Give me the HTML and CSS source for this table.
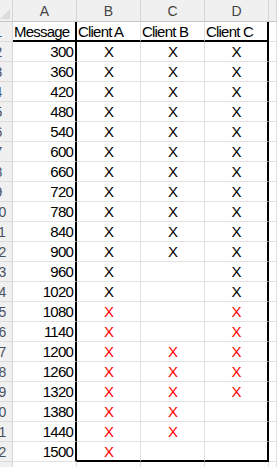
FILE: index.html
```html
<!DOCTYPE html>
<html>
<head>
<meta charset="utf-8">
<link rel="stylesheet" href="styles.css">
</head>
<body>
<div class="sheet">
  <div class="c hd corner"></div>
  <div class="c hd">A</div>
  <div class="c hd">B</div>
  <div class="c hd">C</div>
  <div class="c hd">D</div>
  <div class="c hd"></div>

  <div class="c rh sel"><span>1</span></div>
  <div class="c t br bb">Message</div>
  <div class="c t bb">Client A</div>
  <div class="c t bb">Client B</div>
  <div class="c t br bb">Client C</div>
  <div class="c"></div>

  <div class="c rh"><span>2</span></div><div class="c n br">300</div><div class="c x">X</div><div class="c x">X</div><div class="c x br">X</div><div class="c"></div>
  <div class="c rh"><span>3</span></div><div class="c n br">360</div><div class="c x">X</div><div class="c x">X</div><div class="c x br">X</div><div class="c"></div>
  <div class="c rh"><span>4</span></div><div class="c n br">420</div><div class="c x">X</div><div class="c x">X</div><div class="c x br">X</div><div class="c"></div>
  <div class="c rh"><span>5</span></div><div class="c n br">480</div><div class="c x">X</div><div class="c x">X</div><div class="c x br">X</div><div class="c"></div>
  <div class="c rh"><span>6</span></div><div class="c n br">540</div><div class="c x">X</div><div class="c x">X</div><div class="c x br">X</div><div class="c"></div>
  <div class="c rh"><span>7</span></div><div class="c n br">600</div><div class="c x">X</div><div class="c x">X</div><div class="c x br">X</div><div class="c"></div>
  <div class="c rh"><span>8</span></div><div class="c n br">660</div><div class="c x">X</div><div class="c x">X</div><div class="c x br">X</div><div class="c"></div>
  <div class="c rh"><span>9</span></div><div class="c n br">720</div><div class="c x">X</div><div class="c x">X</div><div class="c x br">X</div><div class="c"></div>
  <div class="c rh"><span>10</span></div><div class="c n br">780</div><div class="c x">X</div><div class="c x">X</div><div class="c x br">X</div><div class="c"></div>
  <div class="c rh"><span>11</span></div><div class="c n br">840</div><div class="c x">X</div><div class="c x">X</div><div class="c x br">X</div><div class="c"></div>
  <div class="c rh"><span>12</span></div><div class="c n br">900</div><div class="c x">X</div><div class="c x">X</div><div class="c x br">X</div><div class="c"></div>
  <div class="c rh"><span>13</span></div><div class="c n br">960</div><div class="c x">X</div><div class="c x"></div><div class="c x br">X</div><div class="c"></div>
  <div class="c rh"><span>14</span></div><div class="c n br">1020</div><div class="c x">X</div><div class="c x"></div><div class="c x br">X</div><div class="c"></div>
  <div class="c rh"><span>15</span></div><div class="c n br">1080</div><div class="c x red">X</div><div class="c x"></div><div class="c x br red">X</div><div class="c"></div>
  <div class="c rh"><span>16</span></div><div class="c n br">1140</div><div class="c x red">X</div><div class="c x"></div><div class="c x br red">X</div><div class="c"></div>
  <div class="c rh"><span>17</span></div><div class="c n br">1200</div><div class="c x red">X</div><div class="c x red">X</div><div class="c x br red">X</div><div class="c"></div>
  <div class="c rh"><span>18</span></div><div class="c n br">1260</div><div class="c x red">X</div><div class="c x red">X</div><div class="c x br red">X</div><div class="c"></div>
  <div class="c rh"><span>19</span></div><div class="c n br">1320</div><div class="c x red">X</div><div class="c x red">X</div><div class="c x br red">X</div><div class="c"></div>
  <div class="c rh"><span>20</span></div><div class="c n br">1380</div><div class="c x red">X</div><div class="c x red">X</div><div class="c x br"></div><div class="c"></div>
  <div class="c rh"><span>21</span></div><div class="c n br">1440</div><div class="c x red">X</div><div class="c x red">X</div><div class="c x br"></div><div class="c"></div>
  <div class="c rh"><span>22</span></div><div class="c n br">1500</div><div class="c x red bb">X</div><div class="c x bb"></div><div class="c x br bb"></div><div class="c"></div>
  <div class="c rh"><span>23</span></div><div class="c"></div><div class="c"></div><div class="c"></div><div class="c"></div><div class="c"></div>
</div>
</body>
</html>
```
FILE: styles.css
```css
html, body {
  margin: 0;
  padding: 0;
  background: #ffffff;
  overflow: hidden;
}

.sheet {
  display: grid;
  grid-template-columns: 13px 64px 64px 64px 64px 1fr;
  grid-template-rows: 22px;
  grid-auto-rows: 20px;
  width: 277px;
}

.c {
  box-sizing: border-box;
  border-right: 1px solid #e1e1e1;
  border-bottom: 1px solid #e1e1e1;
  font-family: "Liberation Sans", Arial, sans-serif;
  font-size: 15px;
  letter-spacing: -0.8px;
  line-height: 19px;
  white-space: nowrap;
  color: #000000;
}

.hd {
  background: #f0f0f0;
  border-right-color: #d6d6d6;
  border-bottom-color: #c6c6c6;
  color: #454545;
  font-size: 14px;
  letter-spacing: 0;
  line-height: 22px;
  text-align: center;
}

.corner {
  position: relative;
}

.corner::after {
  content: "";
  position: absolute;
  right: 2px;
  bottom: 2px;
  width: 0;
  height: 0;
  border-left: 10px solid transparent;
  border-bottom: 10px solid #dcdcdc;
}

.rh {
  background: #f0f0f0;
  border-right-color: #d6d6d6;
  border-bottom-color: #dcdcdc;
  display: flex;
  justify-content: flex-end;
  overflow: hidden;
  color: #4a5060;
  font-size: 14px;
  letter-spacing: 0;
  line-height: 20px;
}

.rh span {
  flex: none;
  width: 27px;
  text-align: center;
}

.rh.sel {
  color: #2463b0;
}

.t {
  padding-left: 1px;
}

.n {
  text-align: right;
  padding-right: 2px;
}

.x {
  text-align: center;
}

.red {
  color: #ff0000;
}

.br {
  border-right: 2px solid #000000;
}

.bb {
  border-bottom: 2px solid #000000;
}
```
